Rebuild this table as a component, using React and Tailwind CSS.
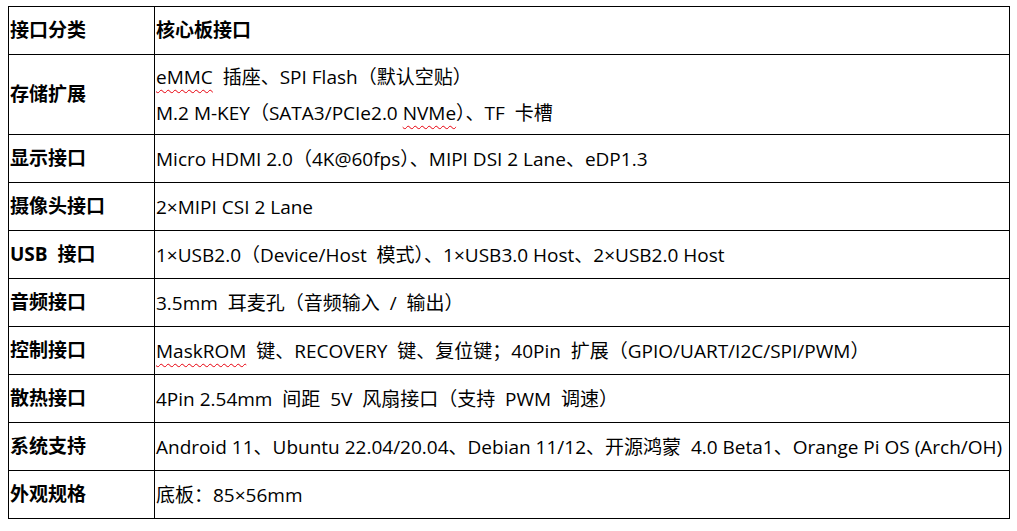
const wavy = "underline decoration-wavy decoration-red-600 decoration-1 underline-offset-[5px]";

const rows = [
  { label: "存储扩展", lines: [
    <>
      <span className={wavy}>eMMC</span>  插座、SPI Flash（默认空贴）
    </>,
    <>
      M.2 M-KEY（SATA3/PCIe2.0 <span className={wavy}>NVMe</span>）、TF  卡槽
    </>,
  ] },
  { label: "显示接口", lines: ["Micro HDMI 2.0（4K@60fps）、MIPI DSI 2 Lane、eDP1.3"] },
  { label: "摄像头接口", lines: ["2×MIPI CSI 2 Lane"] },
  { label: "USB  接口", lines: ["1×USB2.0（Device/Host  模式）、1×USB3.0 Host、2×USB2.0 Host"] },
  { label: "音频接口", lines: ["3.5mm  耳麦孔（音频输入  /  输出）"] },
  { label: "控制接口", lines: [
    <>
      <span className={wavy}>MaskROM</span>  键、RECOVERY  键、复位键；40Pin  扩展（GPIO/UART/I2C/SPI/PWM）
    </>,
  ] },
  { label: "散热接口", lines: ["4Pin 2.54mm  间距  5V  风扇接口（支持  PWM  调速）"] },
  { label: "系统支持", lines: ["Android 11、Ubuntu 22.04/20.04、Debian 11/12、开源鸿蒙  4.0 Beta1、Orange Pi OS (Arch/OH)"] },
  { label: "外观规格", lines: ["底板：85×56mm"] },
];

export default function App() {
  return (
    <div
      className="w-[1017px] h-[531px] bg-white text-black pt-[6px] pl-[8px]"
      style={{ fontFamily: '"Open Sans", "Noto Sans CJK SC", sans-serif' }}
    >
      <table className="border-collapse text-[19px] w-[1002px] table-fixed">
        <colgroup>
          <col className="w-[146px]" />
          <col />
        </colgroup>
        <tbody>
          <tr className="h-[48px]">
            <td className="border border-black pl-[1px] font-bold">接口分类</td>
            <td className="border border-black pl-[1px] font-bold">核心板接口</td>
          </tr>
          {rows.map((r) => (
            <tr key={r.label} className={r.lines.length > 1 ? "h-[80px]" : "h-[48px]"}>
              <td className="border border-black pl-[1px] font-bold whitespace-pre">{r.label}</td>
              <td className="border border-black pl-[1px] whitespace-pre">
                {r.lines.map((l, i) => (
                  <div key={i} className="leading-[36px]">{l}</div>
                ))}
              </td>
            </tr>
          ))}
        </tbody>
      </table>
    </div>
  );
}
